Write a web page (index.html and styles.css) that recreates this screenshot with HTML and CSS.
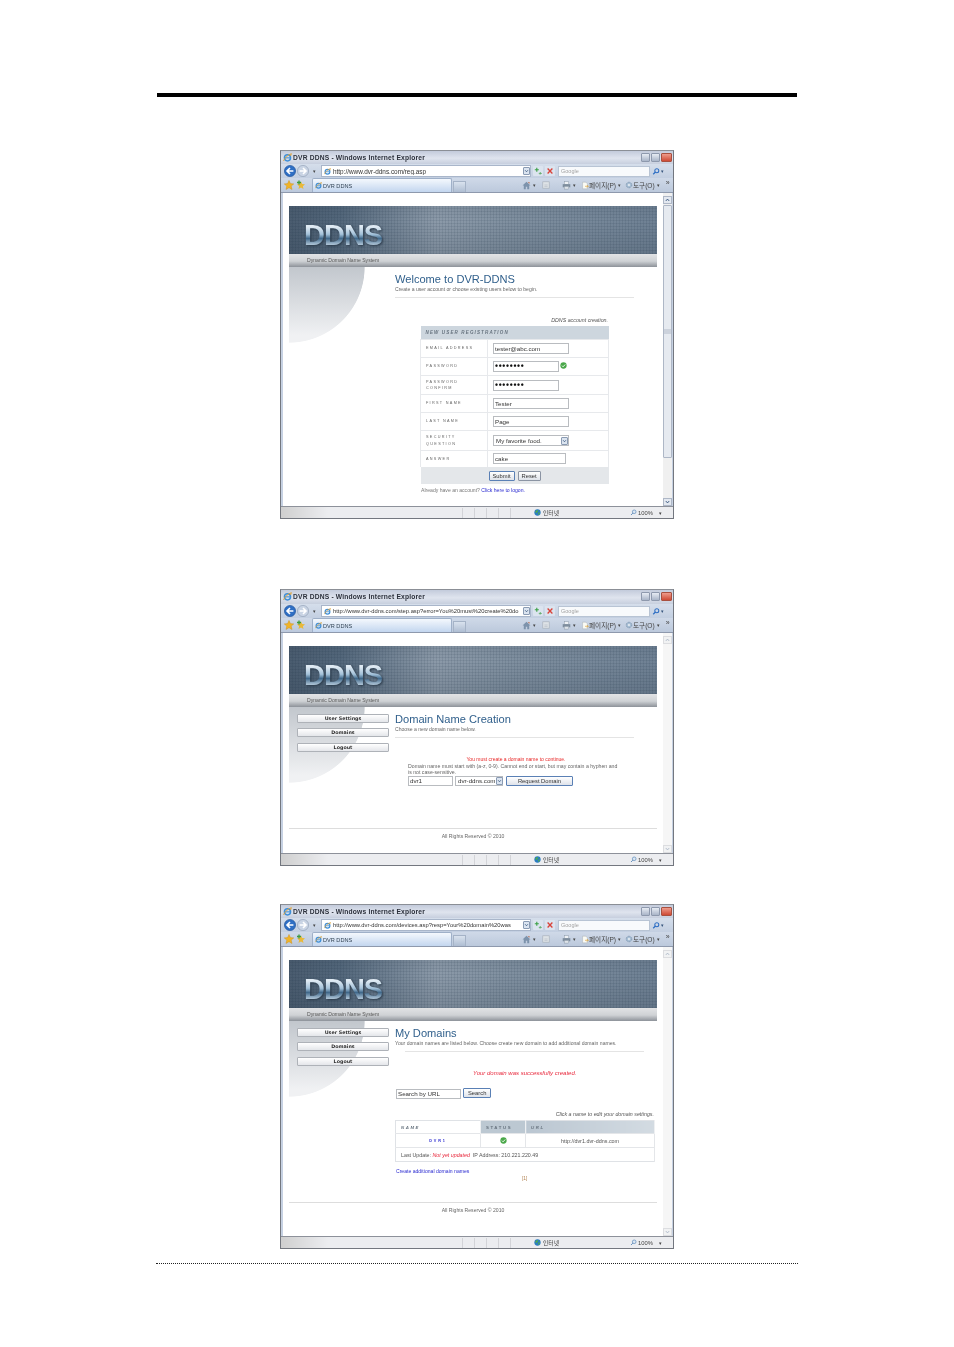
FILE: index.html
```html
<!DOCTYPE html>
<html>
<head>
    <title>DVR DDNS manual page</title>
    <link rel="stylesheet" href="styles.css">
</head>
<body>
    <svg class="sprites" width="0" height="0">
        <symbol id="ie" viewBox="0 0 10 10">
            <circle cx="5" cy="5.400" r="3.400" fill="none" stroke="#3f8fd8" stroke-width="1.700"/>
            <path d="M2 5.400h6" stroke="#3f8fd8" stroke-width="1.200"/>
            <path d="M.6 8.800C2 5 6 1.600 9.400.8 8.600 2 8.400 2.600 8.600 3.400" fill="none" stroke="#e0a030" stroke-width="1"/>
        </symbol>
        <symbol id="back" viewBox="0 0 12 12">
            <circle cx="6" cy="6" r="5.600" fill="#2f6fc4" stroke="#1d4f96" stroke-width=".6"/>
            <path d="M9.400 6H3.400M6 3 3 6l3 3" fill="none" stroke="#fff" stroke-width="1.600"/>
        </symbol>
        <symbol id="fwd" viewBox="0 0 12 12">
            <circle cx="6" cy="6" r="5.600" fill="#c9d4e4" stroke="#8f9db3" stroke-width=".6"/>
            <path d="M2.600 6h6M6 3l3 3-3 3" fill="none" stroke="#fff" stroke-width="1.600"/>
        </symbol>
        <symbol id="star" viewBox="0 0 10 10">
            <path d="M5 .4 6.400 3.600l3.400.3-2.600 2.200.8 3.400L5 7.700 2 9.500l.8-3.400L.2 3.900l3.400-.3z" fill="#f0b429" stroke="#c98a12" stroke-width=".4"/>
        </symbol>
        <symbol id="addfav" viewBox="0 0 10 10">
            <path d="M5 1.400 6.200 4l2.800.3-2.100 1.900.6 2.800L5 7.500 2.500 9l.6-2.800L1 4.300 3.800 4z" fill="#e9b93a"/>
            <path d="M1 2.500h4M3 .5v4" stroke="#3f9a3f" stroke-width="1.300"/>
        </symbol>
        <symbol id="go" viewBox="0 0 10 10">
            <path d="M1 3.500h5M3.500 1v5" stroke="#3aa045" stroke-width="1.400"/>
            <path d="M6 8h3M7.500 6.500 9 8 7.500 9.500" fill="none" stroke="#3aa045" stroke-width=".9"/>
        </symbol>
        <symbol id="stop" viewBox="0 0 10 10">
            <path d="M2 2l6 6M8 2 2 8" stroke="#d9433a" stroke-width="1.700"/>
        </symbol>
        <symbol id="lens" viewBox="0 0 10 10">
            <circle cx="6" cy="4" r="2.500" fill="none" stroke="#2f6fc4" stroke-width="1.300"/>
            <path d="M4 6 1.500 8.500" stroke="#2f6fc4" stroke-width="1.600"/>
        </symbol>
        <symbol id="home" viewBox="0 0 10 10">
            <path d="M5 .8.600 5h1.400v4.200h2.200V6.400h1.600v2.800H8V5h1.400z" fill="#7d93ac"/>
            <path d="M7 1h1.300v2L7 2z" fill="#b9684a"/>
        </symbol>
        <symbol id="feed" viewBox="0 0 10 10">
            <rect x="1" y="1" width="8" height="8" fill="#dde2e6" stroke="#a8b0b8" stroke-width=".8"/>
            <path d="M3 7h4M3 5h4" stroke="#b4bcc4" stroke-width=".8"/>
        </symbol>
        <symbol id="print" viewBox="0 0 10 10">
            <rect x="2.500" y=".8" width="5" height="3" fill="#eef1f4" stroke="#8795a4" stroke-width=".5"/>
            <rect x=".8" y="3.500" width="8.400" height="3.500" fill="#7e8d9d"/>
            <rect x="2.500" y="6" width="5" height="3" fill="#dfe4e9" stroke="#8795a4" stroke-width=".5"/>
        </symbol>
        <symbol id="pageicon" viewBox="0 0 10 10">
            <path d="M2 .8h4l2 2v6.400H2z" fill="#fbfbf4" stroke="#a9aeb4" stroke-width=".6"/>
            <path d="M5 6h4M7.500 4.500 9 6 7.500 7.500" fill="none" stroke="#e0a030" stroke-width=".8"/>
        </symbol>
        <symbol id="gear" viewBox="0 0 10 10">
            <circle cx="5" cy="5" r="3.400" fill="#a9c0d6" stroke="#7a93ac" stroke-width="1.200" stroke-dasharray="1.300 .7"/>
            <circle cx="5" cy="5" r="1.300" fill="#e8eef4"/>
        </symbol>
        <symbol id="globe" viewBox="0 0 10 10">
            <circle cx="5" cy="5" r="4.500" fill="#2b7cc0"/>
            <path d="M2 3c1-1 3-1.500 4-1 0 1-1 1.500-1.500 2.500S3 6 2.500 5.500zM6 5.500c1-.5 2-.5 2.500 0-.3 1.500-1.200 2.500-2 3-.6-1-.9-2-.5-3z" fill="#4fae4b"/>
        </symbol>
        <symbol id="zoomicon" viewBox="0 0 10 10">
            <circle cx="6" cy="4" r="2.600" fill="#dbe7f3" stroke="#4d7fb3" stroke-width=".9"/>
            <path d="M4 6 1.500 8.500" stroke="#4d7fb3" stroke-width="1.300"/>
        </symbol>
        <symbol id="tick" viewBox="0 0 10 10">
            <circle cx="5" cy="5" r="4.500" fill="#4aa84a"/>
            <path d="M2.800 5.200 4.400 6.800 7.400 3.600" fill="none" stroke="#fff" stroke-width="1.300"/>
        </symbol>
        <symbol id="arrow" viewBox="0 0 8 8">
            <path d="M1.800 2.800 4 5.200l2.200-2.400" fill="none" stroke="#33527a" stroke-width="1.300"/>
        </symbol>
    </svg>

    <div class="sheet">
        <div class="top-rule"></div>

        <!-- registration -->
        <div class="browser browser-reg">
            <div class="titlebar">
                <svg class="ico"><use href="#ie"/></svg>
                <span class="title-text">DVR DDNS - Windows Internet Explorer</span>
                <span class="winbtn"></span><span class="winbtn"></span><span class="winbtn winbtn-close"></span>
            </div>
            <div class="addrbar">
                <svg class="nav-ico"><use href="#back"/></svg>
                <svg class="nav-ico"><use href="#fwd"/></svg>
                <span class="drop">▾</span>
                <div class="url">
                    <svg class="ico-s"><use href="#ie"/></svg>
                    <span class="url-text">http://www.dvr-ddns.com/reg.asp</span>
                    <span class="combo-btn"><svg><use href="#arrow"/></svg></span>
                </div>
                <svg class="tool"><use href="#go"/></svg>
                <svg class="tool"><use href="#stop"/></svg>
                <div class="searchbox">Google</div>
                <svg class="tool-s"><use href="#lens"/></svg>
                <span class="drop drop-s">▾</span>
            </div>
            <div class="tabbar">
                <svg class="fav"><use href="#star"/></svg>
                <svg class="fav"><use href="#addfav"/></svg>
                <div class="tab"><svg class="ico-s"><use href="#ie"/></svg>DVR DDNS</div>
                <div class="newtab"></div>
                <div class="cmds">
                    <svg class="fav"><use href="#home"/></svg><span class="drop">▾</span>
                    <svg class="cmd-feed"><use href="#feed"/></svg>
                    <svg class="cmd-print"><use href="#print"/></svg><span class="drop">▾</span>
                    <svg class="cmd-page"><use href="#pageicon"/></svg><span class="cmd-label">페이지(P)</span><span class="drop">▾</span>
                    <svg class="cmd-gear"><use href="#gear"/></svg><span class="cmd-label">도구(O)</span><span class="drop">▾</span>
                    <span class="more">»</span>
                </div>
            </div>
            <div class="view view-reg">
                <div class="page">
                    <div class="banner"><span class="logo">DDNS</span></div>
                    <div class="strip">Dynamic Domain Name System</div>
                    <div class="site-main">
                        <div class="side"></div>
                        <div class="content">
                            <h1>Welcome to DVR-DDNS</h1>
                            <p class="sub">Create a user account or choose existing users below to begin.</p>
                            <div class="sub-line sub-line-reg"></div>
                            <p class="note note-reg">DDNS account creation.</p>
                            <table class="reg-table">
                                <colgroup><col class="reg-col-label"><col></colgroup>
                                <tr class="reg-head"><th colspan="2">NEW USER REGISTRATION</th></tr>
                                <tr class="h18"><td class="lbl">EMAIL ADDRESS</td><td><div class="field w76">tester@abc.com</div></td></tr>
                                <tr class="h18"><td class="lbl">PASSWORD</td><td class="with-hint"><div class="field w66 dots">••••••••</div><svg class="hint"><use href="#tick"/></svg></td></tr>
                                <tr class="h19"><td class="lbl">PASSWORD<br>CONFIRM</td><td><div class="field w66 dots">••••••••</div></td></tr>
                                <tr class="h18"><td class="lbl">FIRST NAME</td><td><div class="field w76">Tester</div></td></tr>
                                <tr class="h18"><td class="lbl">LAST NAME</td><td><div class="field w76">Page</div></td></tr>
                                <tr class="h20"><td class="lbl">SECURITY<br>QUESTION</td><td><div class="field w76 select">My favorite food.<span class="combo-btn"><svg><use href="#arrow"/></svg></span></div></td></tr>
                                <tr class="h16"><td class="lbl">ANSWER</td><td><div class="field w73">cake</div></td></tr>
                                <tr class="reg-foot"><td colspan="2"><span class="btn btn-default">Submit</span><span class="btn">Reset</span></td></tr>
                            </table>
                            <p class="logon">Already have an account? <a>Click here to logon.</a></p>
                        </div>
                    </div>
                </div>
                <div class="scrollbar">
                    <span class="sb-btn"><svg><use href="#arrow"/></svg></span>
                    <span class="sb-thumb"></span>
                    <span class="sb-btn sb-down"><svg><use href="#arrow"/></svg></span>
                </div>
            </div>
            <div class="statusbar">
                <span class="st-cell"></span><span class="st-cell"></span><span class="st-cell"></span><span class="st-cell"></span><span class="st-cell"></span>
                <span class="st-zone"><svg class="ico-s"><use href="#globe"/></svg>인터넷</span>
                <span class="st-zoom"><svg class="ico-s"><use href="#zoomicon"/></svg>100%<span class="drop">▾</span></span>
            </div>
        </div>

        <!-- domain creation -->
        <div class="browser browser-create">
            <div class="titlebar">
                <svg class="ico"><use href="#ie"/></svg>
                <span class="title-text">DVR DDNS - Windows Internet Explorer</span>
                <span class="winbtn"></span><span class="winbtn"></span><span class="winbtn winbtn-close"></span>
            </div>
            <div class="addrbar">
                <svg class="nav-ico"><use href="#back"/></svg>
                <svg class="nav-ico"><use href="#fwd"/></svg>
                <span class="drop">▾</span>
                <div class="url">
                    <svg class="ico-s"><use href="#ie"/></svg>
                    <span class="url-text url-long">http://www.dvr-ddns.com/step.asp?error=You%20must%20create%20do</span>
                    <span class="combo-btn"><svg><use href="#arrow"/></svg></span>
                </div>
                <svg class="tool"><use href="#go"/></svg>
                <svg class="tool"><use href="#stop"/></svg>
                <div class="searchbox">Google</div>
                <svg class="tool-s"><use href="#lens"/></svg>
                <span class="drop drop-s">▾</span>
            </div>
            <div class="tabbar">
                <svg class="fav"><use href="#star"/></svg>
                <svg class="fav"><use href="#addfav"/></svg>
                <div class="tab"><svg class="ico-s"><use href="#ie"/></svg>DVR DDNS</div>
                <div class="newtab"></div>
                <div class="cmds">
                    <svg class="fav"><use href="#home"/></svg><span class="drop">▾</span>
                    <svg class="cmd-feed"><use href="#feed"/></svg>
                    <svg class="cmd-print"><use href="#print"/></svg><span class="drop">▾</span>
                    <svg class="cmd-page"><use href="#pageicon"/></svg><span class="cmd-label">페이지(P)</span><span class="drop">▾</span>
                    <svg class="cmd-gear"><use href="#gear"/></svg><span class="cmd-label">도구(O)</span><span class="drop">▾</span>
                    <span class="more">»</span>
                </div>
            </div>
            <div class="view view-create">
                <div class="page">
                    <div class="banner"><span class="logo">DDNS</span></div>
                    <div class="strip">Dynamic Domain Name System</div>
                    <div class="site-main">
                        <div class="side">
                            <a class="side-btn">User Settings</a>
                            <a class="side-btn">Domains</a>
                            <a class="side-btn side-btn-last">Logout</a>
                        </div>
                        <div class="content">
                            <h1>Domain Name Creation</h1>
                            <p class="sub">Choose a new domain name below.</p>
                            <div class="sub-line sub-line-reg"></div>
                            <div class="create-form">
                                <p class="error-msg">You must create a domain name to continue.</p>
                                <p class="rules">Domain name must start with (a-z, 0-9). Cannot end or start, but may contain a hyphen and<br>is not case-sensitive.</p>
                                <div class="request-row">
                                    <div class="field w45">dvr1</div>
                                    <div class="field w48 select">dvr-ddns.com<span class="combo-btn"><svg><use href="#arrow"/></svg></span></div>
                                    <span class="btn btn-default btn-wide">Request Domain</span>
                                </div>
                            </div>
                        </div>
                    </div>
                    <div class="site-foot site-foot-create">All Rights Reserved © 2010</div>
                </div>
                <div class="scrollbar scrollbar-off">
                    <span class="sb-btn"><svg><use href="#arrow"/></svg></span>
                    <span class="sb-fill"></span>
                    <span class="sb-btn sb-down"><svg><use href="#arrow"/></svg></span>
                </div>
            </div>
            <div class="statusbar">
                <span class="st-cell"></span><span class="st-cell"></span><span class="st-cell"></span><span class="st-cell"></span><span class="st-cell"></span>
                <span class="st-zone"><svg class="ico-s"><use href="#globe"/></svg>인터넷</span>
                <span class="st-zoom"><svg class="ico-s"><use href="#zoomicon"/></svg>100%<span class="drop">▾</span></span>
            </div>
        </div>

        <!-- domain list -->
        <div class="browser browser-list">
            <div class="titlebar">
                <svg class="ico"><use href="#ie"/></svg>
                <span class="title-text">DVR DDNS - Windows Internet Explorer</span>
                <span class="winbtn"></span><span class="winbtn"></span><span class="winbtn winbtn-close"></span>
            </div>
            <div class="addrbar">
                <svg class="nav-ico"><use href="#back"/></svg>
                <svg class="nav-ico"><use href="#fwd"/></svg>
                <span class="drop">▾</span>
                <div class="url">
                    <svg class="ico-s"><use href="#ie"/></svg>
                    <span class="url-text url-long">http://www.dvr-ddns.com/devices.asp?resp=Your%20domain%20was</span>
                    <span class="combo-btn"><svg><use href="#arrow"/></svg></span>
                </div>
                <svg class="tool"><use href="#go"/></svg>
                <svg class="tool"><use href="#stop"/></svg>
                <div class="searchbox">Google</div>
                <svg class="tool-s"><use href="#lens"/></svg>
                <span class="drop drop-s">▾</span>
            </div>
            <div class="tabbar">
                <svg class="fav"><use href="#star"/></svg>
                <svg class="fav"><use href="#addfav"/></svg>
                <div class="tab"><svg class="ico-s"><use href="#ie"/></svg>DVR DDNS</div>
                <div class="newtab"></div>
                <div class="cmds">
                    <svg class="fav"><use href="#home"/></svg><span class="drop">▾</span>
                    <svg class="cmd-feed"><use href="#feed"/></svg>
                    <svg class="cmd-print"><use href="#print"/></svg><span class="drop">▾</span>
                    <svg class="cmd-page"><use href="#pageicon"/></svg><span class="cmd-label">페이지(P)</span><span class="drop">▾</span>
                    <svg class="cmd-gear"><use href="#gear"/></svg><span class="cmd-label">도구(O)</span><span class="drop">▾</span>
                    <span class="more">»</span>
                </div>
            </div>
            <div class="view view-list">
                <div class="page">
                    <div class="banner"><span class="logo">DDNS</span></div>
                    <div class="strip">Dynamic Domain Name System</div>
                    <div class="site-main">
                        <div class="side">
                            <a class="side-btn">User Settings</a>
                            <a class="side-btn">Domains</a>
                            <a class="side-btn side-btn-last">Logout</a>
                        </div>
                        <div class="content">
                            <h1>My Domains</h1>
                            <p class="sub">Your domain names are listed below.  Choose create new domain to add additional domain names.</p>
                            <div class="sub-line sub-line-list"></div>
                            <p class="success-msg">Your domain was successfully created.</p>
                            <div class="search-row">
                                <div class="field w65">Search by URL</div>
                                <span class="btn btn-default">Search</span>
                            </div>
                            <p class="note note-list">Click a name to edit your domain settings.</p>
                            <table class="dom-table">
                                <tr class="dom-head"><th class="col-name">NAME</th><th class="col-status">STATUS</th><th class="col-url">URL</th></tr>
                                <tr class="dom-row">
                                    <td class="dom-name">DVR1</td>
                                    <td class="dom-status"><svg class="tick"><use href="#tick"/></svg></td>
                                    <td class="dom-url">http://dvr1.dvr-ddns.com</td>
                                </tr>
                                <tr class="dom-row"><td colspan="3" class="dom-info">Last Update: <em>Not yet updated</em>&nbsp; IP Address: 210.221.220.49</td></tr>
                            </table>
                            <p class="create-link"><a>Create additional domain names</a></p>
                            <p class="pager">[1]</p>
                        </div>
                    </div>
                    <div class="site-foot site-foot-list">All Rights Reserved © 2010</div>
                </div>
                <div class="scrollbar scrollbar-off">
                    <span class="sb-btn"><svg><use href="#arrow"/></svg></span>
                    <span class="sb-fill"></span>
                    <span class="sb-btn sb-down"><svg><use href="#arrow"/></svg></span>
                </div>
            </div>
            <div class="statusbar">
                <span class="st-cell"></span><span class="st-cell"></span><span class="st-cell"></span><span class="st-cell"></span><span class="st-cell"></span>
                <span class="st-zone"><svg class="ico-s"><use href="#globe"/></svg>인터넷</span>
                <span class="st-zoom"><svg class="ico-s"><use href="#zoomicon"/></svg>100%<span class="drop">▾</span></span>
            </div>
        </div>

        <div class="bottom-rule"></div>
    </div>
</body>
</html>
```

FILE: styles.css
```css
html, body {
    margin: 0;
    padding: 0;
    background: #fff;
}
body {
    font-family: "Liberation Sans", "Noto Sans CJK KR", sans-serif;
    color: #666;
}
p, h1 { margin: 0; }
.sprites { position: absolute; }

.sheet {
    width: 954px;
    height: 1347px;
    padding-top: 93px;
    box-sizing: border-box;
    overflow: hidden;
}
.top-rule {
    height: 4px;
    margin: 0 157px;
    background: #000;
}
.bottom-rule {
    margin: 14px 156px 0;
    border-top: 1px dotted #222;
}

/* browser window */
.browser {
    width: 394px;
    margin-left: 280px;
    box-sizing: border-box;
    background: #c6d1e2;
    border: 1px solid #73777f;
    border-top-color: #8b8f96;
    filter: blur(0.3px);
}
.browser-reg { margin-top: 53px; }
.browser-create { margin-top: 70px; }
.browser-list { margin-top: 38px; }

.titlebar {
    height: 13px;
    display: flex;
    align-items: center;
    padding: 0 1px 1px 2px;
    box-sizing: border-box;
    background: linear-gradient(#c3cbdb, #dfe4ee 55%, #c7cfde);
}
.browser-create .titlebar { height: 14px; }
.ico { width: 9px; height: 9px; margin-right: 1px; }
.title-text {
    flex: 1;
    font-size: 6.700px;
    font-weight: bold;
    color: #2a2f3a;
    letter-spacing: 0.180px;
}
.winbtn {
    width: 9px;
    height: 9px;
    margin-left: 1px;
    border: 1px solid #8e99ad;
    border-radius: 1px;
    box-sizing: border-box;
    background: linear-gradient(#e6ebf3, #aab5c8);
}
.winbtn-close {
    width: 11px;
    background: linear-gradient(#ee9c8c, #cf4a35);
    border-color: #a9503f;
}

.addrbar {
    height: 14px;
    display: flex;
    align-items: center;
    padding-left: 3px;
    background: linear-gradient(#d5deeb, #c3cfe1);
}
.nav-ico { width: 12px; height: 12px; margin-right: 1px; }
.drop {
    font-size: 5px;
    line-height: 6px;
    color: #444;
    margin: 0 3px;
}
.drop-s { margin: 0 0 0 1px; color: #33527a; }
.url {
    width: 210px;
    height: 12px;
    margin-left: 2px;
    display: flex;
    align-items: center;
    box-sizing: border-box;
    padding: 0 0 0 2px;
    background: #fff;
    border: 1px solid #a9b6ca;
    font-size: 6.400px;
    color: #333;
    overflow: hidden;
}
.ico-s { width: 7px; height: 7px; margin-right: 1px; flex: none; }
.url-text {
    flex: 1;
    min-width: 0;
    margin-left: 1px;
    white-space: nowrap;
    overflow: hidden;
}
.url-long { font-size: 5.800px; }
.combo-btn {
    flex: none;
    width: 7px;
    height: 8px;
    margin: 0 0 0 1px;
    box-sizing: border-box;
    border: 1px solid #8a9bb3;
    border-radius: 1px;
    background: #dbe4f0;
    display: flex;
}
.combo-btn svg { width: 100%; height: 100%; }
.tool {
    width: 10px;
    height: 10px;
    margin-left: 2px;
    padding: 1px;
    box-sizing: border-box;
    background: #dce4ef;
    border-radius: 1px;
}
.searchbox {
    width: 92px;
    height: 11px;
    margin: 0 2px 0 3px;
    padding-left: 2px;
    box-sizing: border-box;
    background: #f8fafc;
    border: 1px solid #b8c4d4;
    font-size: 5.500px;
    line-height: 9px;
    color: #a3a3a3;
}
.tool-s { width: 8px; height: 9px; }

.tabbar {
    height: 15px;
    display: flex;
    align-items: center;
    padding-left: 3px;
    background: linear-gradient(#cfd9e8, #bcc9dc);
    border-bottom: 1px solid #8e99ad;
    box-sizing: border-box;
}
.fav { width: 10px; height: 10px; margin-right: 2px; flex: none; }
.tab {
    width: 140px;
    height: 14px;
    margin-left: 4px;
    padding-left: 2px;
    box-sizing: border-box;
    display: flex;
    align-items: center;
    align-self: flex-end;
    background: linear-gradient(#f4f8fd, #c3d6ef);
    border: 1px solid #9fb0c8;
    border-bottom: 0;
    border-radius: 2px 2px 0 0;
    font-size: 5.600px;
    color: #345;
}
.newtab {
    width: 13px;
    height: 11px;
    margin-left: 1px;
    align-self: flex-end;
    box-sizing: border-box;
    background: linear-gradient(#d9e2ee, #aebdd2);
    border: 1px solid #a5b3c7;
    border-bottom: 0;
}
.cmds {
    display: flex;
    align-items: center;
    margin-left: 56px;
    font-size: 6px;
    color: #444;
}
.cmds .fav { width: 9px; height: 9px; margin-right: 0; }
.cmds .drop { margin: 0 2px; }
.cmd-feed { width: 8px; height: 8px; margin: 0 12px 0 4px; }
.cmd-print { width: 9px; height: 9px; }
.cmd-page { width: 8px; height: 9px; margin-left: 3px; }
.cmd-gear { width: 8px; height: 8px; margin-left: 2px; }
.cmd-label { font-size: 6.600px; }
.more { margin-left: 4px; font-size: 7px; line-height: 6px; align-self: flex-start; }

.view {
    display: flex;
    margin: 0 1px 0 2px;
    background: #fff;
}
.view-reg { height: 313px; }
.view-create { height: 220px; }
.view-list { height: 289px; }

.page {
    flex: 1;
    min-width: 0;
    padding: 13px 6px 0;
    box-sizing: border-box;
}
.banner {
    height: 48px;
    padding: 17px 0 0 15px;
    box-sizing: border-box;
    background:
        repeating-linear-gradient(90deg, rgba(25,45,65,.1) 0 1px, transparent 1px 3px),
        repeating-linear-gradient(0deg, rgba(25,45,65,.1) 0 1px, transparent 1px 3px),
        linear-gradient(rgba(50,65,80,.1), rgba(50,65,80,0) 30%, rgba(50,65,80,.2)),
        linear-gradient(90deg, #4a5c6f, #53677b 14%, #8c9aa9 40%, #8090a0 60%, #6f8194);
}
.logo {
    display: block;
    font-size: 29px;
    line-height: 25px;
    font-weight: bold;
    letter-spacing: -1px;
    color: transparent;
    background: linear-gradient(#dfeaf3 15%, #a4c2da 45%, #41698b 62%, #a8bfd2 85%);
    -webkit-background-clip: text;
    background-clip: text;
    width: 90px;
    filter: drop-shadow(1px 1px 1px #2a3a4a);
}
.strip {
    height: 13px;
    padding-left: 18px;
    font-size: 5.100px;
    line-height: 13px;
    color: #555;
    background: linear-gradient(#e2e3e5, #cfd2d5 55%, #8d9299);
}
.site-main {
    display: flex;
    background:
        radial-gradient(circle 76px at 0 0, transparent 99%, #fff 100%) no-repeat 0 0 / 76px 76px,
        linear-gradient(#c2c7cd, #f0f1f3 90%) no-repeat 0 0 / 76px 76px;
}
.side {
    width: 106px;
    flex: none;
    padding: 7px 0 0 8px;
    box-sizing: border-box;
}
.side-btn {
    display: block;
    width: 92px;
    height: 9px;
    margin-bottom: 5px;
    box-sizing: border-box;
    background: linear-gradient(#fff, #e4e6ea);
    border: 1px solid #aeb2b8;
    border-radius: 1px;
    text-align: center;
    font: bold 4.800px/7px "DejaVu Sans", sans-serif;
    color: #333;
}
.side-btn:nth-child(2) { margin-bottom: 6px; }
.side-btn-last { margin-bottom: 0; }
.content {
    flex: 1;
    min-width: 0;
}
h1 {
    font-size: 11.100px;
    line-height: 14px;
    font-weight: normal;
    color: #31608c;
    margin-top: 5px;
}
.sub {
    font-size: 5.100px;
    line-height: 6px;
    color: #666;
}
.sub-line {
    height: 1px;
    background: #e4e4e4;
    margin-top: 5px;
}
.sub-line-reg { width: 239px; }
.sub-line-list { width: 239px; margin-left: 10px; }

.note {
    font-size: 5.300px;
    line-height: 6px;
    font-style: italic;
    color: #555;
    text-align: right;
}
.note-reg { margin-top: 19px; width: 213px; }
.note-list { margin-top: 12px; width: 259px; }

/* registration table */
.reg-table {
    border-collapse: collapse;
    width: 189px;
    margin: 3px 0 0 25px;
    table-layout: fixed;
}
.reg-col-label { width: 67px; }
.reg-table td {
    padding: 0;
    border-top: 1px solid #e7e9ec;
    border-right: 1px solid #e7e9ec;
}
.reg-table td:first-child { border-left: 1px solid #e7e9ec; }
.reg-table .reg-foot td { border: 0; }
.reg-table td:last-child { padding-left: 5px; }
.reg-head th {
    height: 13px;
    padding: 0 0 0 5px;
    text-align: left;
    background: #cdd6de;
    font-size: 4.500px;
    font-style: italic;
    letter-spacing: 1.150px;
    color: #66727e;
}
.h16 { height: 16px; }
.h18 { height: 18px; }
.h19 { height: 19px; }
.h20 { height: 20px; }
.lbl {
    padding-left: 5px !important;
    font: 3.800px/6.500px "Liberation Sans", sans-serif;
    letter-spacing: 1.300px;
    color: #666;
}
.field {
    height: 11px;
    box-sizing: border-box;
    border: 1px solid #b9bcc0;
    background: #fff;
    font-size: 6.200px;
    line-height: 9px;
    padding-left: 1px;
    color: #333;
    white-space: nowrap;
}
.w45 { width: 45px; }
.w48 { width: 48px; }
.w65 { width: 65px; }
.w66 { width: 66px; }
.w73 { width: 73px; }
.w76 { width: 76px; }
.dots {
    font-size: 8.500px;
    font-weight: bold;
    letter-spacing: 0.700px;
    color: #111;
}
.with-hint { position: relative; }
.hint {
    position: absolute;
    left: 72px;
    top: 4px;
    width: 7px;
    height: 7px;
}
.select {
    display: flex;
    align-items: center;
    justify-content: space-between;
    padding-left: 2px;
}
.reg-foot td {
    height: 17px;
    background: #e4e7ea;
    padding: 4px 0 0 68px !important;
    box-sizing: border-box;
    vertical-align: top;
    line-height: 0;
}
.btn {
    display: inline-block;
    height: 10px;
    padding: 0 3px;
    box-sizing: border-box;
    background: linear-gradient(#fff, #dfe3ea);
    border: 1px solid #8b94a3;
    border-radius: 1px;
    font-size: 5.800px;
    line-height: 8px;
    color: #333;
    margin-right: 3px;
}
.btn-default { border-color: #5a80b5; }
.logon {
    font-size: 5.100px;
    line-height: 6px;
    margin: 3px 0 0 26px;
    color: #777;
}
a { color: #2a2ad0; }

/* domain creation */
.create-form {
    margin: 18px 0 0 13px;
    width: 216px;
}
.error-msg {
    color: #e82828;
    font-size: 5px;
    line-height: 6px;
    text-align: center;
}
.rules {
    font-size: 5.200px;
    line-height: 6px;
    color: #666;
    margin-top: 1px;
}
.request-row {
    display: flex;
    align-items: center;
    gap: 2px;
    margin-top: 1px;
}
.request-row .field { height: 10px; line-height: 8px; }
.btn-wide {
    width: 67px;
    margin: 0 0 0 1px;
    text-align: center;
}
.site-foot {
    border-top: 1px solid #ddd;
    text-align: center;
    font-size: 5.100px;
    line-height: 6px;
    color: #666;
    padding-top: 4px;
}
.site-foot-create { margin-top: 42px; }
.site-foot-list { margin-top: 20px; }

/* domain list */
.success-msg {
    font-size: 6px;
    line-height: 6px;
    font-style: italic;
    color: #e8283c;
    margin: 18px 0 0 78px;
}
.search-row {
    display: flex;
    margin: 12px 0 0 1px;
    gap: 2px;
}
.search-row .field { height: 10px; line-height: 8px; margin-top: 1px; }
.search-row .btn { margin: 0; padding: 0 4px; }
.dom-table {
    border-collapse: collapse;
    width: 260px;
    margin-top: 3px;
    table-layout: fixed;
    border: 1px solid #dfe2e6;
}
.dom-head th {
    height: 13px;
    box-sizing: border-box;
    padding: 0 0 0 5px;
    text-align: left;
    font-size: 4.300px;
    letter-spacing: 1.600px;
    color: #66727e;
    border-right: 1px solid #eef0f2;
}
.col-name { width: 85px; background: #fff; font-style: italic; }
.col-status { width: 45px; background: #bcc8d2; }
.col-url { background: linear-gradient(90deg, #bac6d1, #d3dbe2); font-style: italic; }
.dom-row td {
    height: 13px;
    padding: 0;
    border-top: 1px solid #e4e6e9;
    border-right: 1px solid #e4e6e9;
}
.dom-name {
    text-align: center;
    color: #2a2ad0;
    font-size: 3.800px;
    font-weight: bold;
    letter-spacing: 1.800px;
}
.dom-status { text-align: center; line-height: 0; }
.tick { width: 7px; height: 7px; vertical-align: middle; }
.dom-url {
    text-align: center;
    font-size: 5.400px;
    color: #555;
}
.dom-info {
    padding-left: 5px !important;
    font-size: 5.300px;
    color: #555;
}
.dom-info em { color: #e8283c; }
.create-link {
    margin: 6px 0 0 1px;
    font-size: 5.100px;
    line-height: 6px;
}
.pager {
    font-size: 4.800px;
    line-height: 6px;
    color: #b08050;
    margin: 2px 0 0 127px;
}

/* scrollbar */
.scrollbar {
    width: 9px;
    flex: none;
    display: flex;
    flex-direction: column;
    background: #f0f0f0;
    padding-top: 3px;
    box-sizing: border-box;
}
.sb-btn {
    height: 8px;
    flex: none;
    box-sizing: border-box;
    background: #e3e8f0;
    border: 1px solid #aeb7c6;
    display: flex;
}
.sb-btn svg { width: 100%; height: 100%; transform: scaleY(-1); }
.sb-down svg { transform: none; }
.sb-thumb {
    height: 253px;
    flex: none;
    margin-top: 1px;
    box-sizing: border-box;
    background: linear-gradient(transparent 49%, #ccd2dc 49% 51%, transparent 51%), #e6eaf0;
    border: 1px solid #aeb7c6;
    border-radius: 1px;
}
.sb-thumb + .sb-down { margin-top: auto; }
.sb-fill { flex: 1; }
.scrollbar-off { background: #f6f6f6; }
.scrollbar-off .sb-btn { background: #f1f2f3; border-color: #dcdde0; }
.scrollbar-off svg { opacity: 0.35; }

/* status bar */
.statusbar {
    height: 12px;
    display: flex;
    align-items: center;
    padding-left: 170px;
    background: linear-gradient(90deg, #cfcfcf, #ecedf0 12%, #ecedf0);
    border-top: 1px solid #8d919a;
    box-sizing: border-box;
    font-size: 5.800px;
    color: #444;
}
.st-cell {
    width: 12px;
    height: 10px;
    border-right: 1px solid #d3d4d8;
    box-sizing: border-box;
}
.st-zone {
    display: flex;
    align-items: center;
    margin-left: 23px;
    width: 96px;
}
.st-zone .ico-s { margin-right: 2px; }
.st-zoom { display: flex; align-items: center; }
.st-zoom .drop { margin-left: 6px; }
```
